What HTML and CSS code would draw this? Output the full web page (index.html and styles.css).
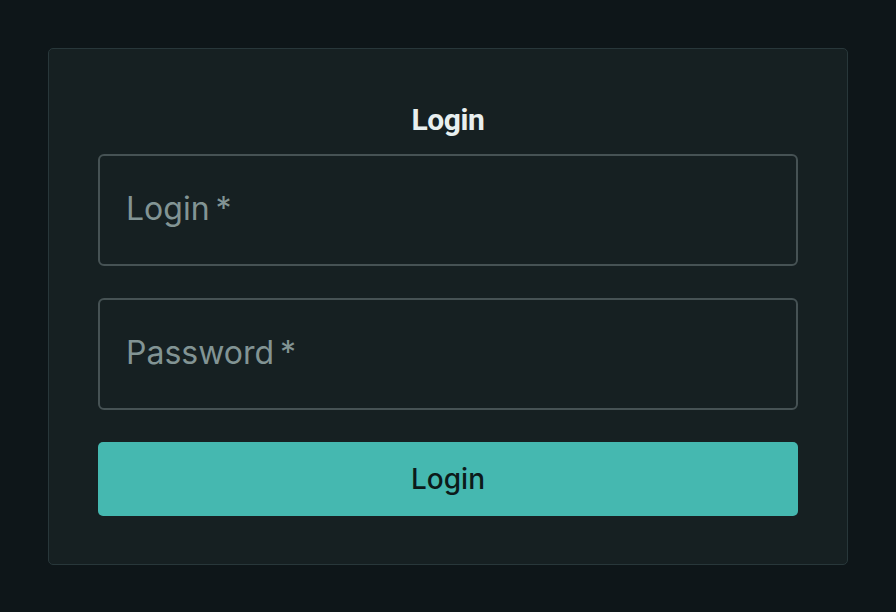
FILE: index.html
```html
<!DOCTYPE html>
<html lang="en">
<head>
<meta charset="utf-8">
<title>Login</title>
<link rel="stylesheet" href="styles.css">
</head>
<body>
<main class="page">
  <form class="card">
    <h1 class="title">Login</h1>
    <div class="fields">
      <label class="field"><span class="field-label">Login&#8201;*</span></label>
      <label class="field"><span class="field-label">Password&#8201;*</span></label>
      <button type="button" class="submit">Login</button>
    </div>
  </form>
</main>
</body>
</html>
```

FILE: styles.css
```css
html, body {
  margin: 0;
  padding: 0;
  background: #0e1619;
}
body {
  font-family: Inter, "Noto Sans", sans-serif;
}
.page {
  padding: 48px;
}
.card {
  box-sizing: border-box;
  width: 800px;
  height: 517px;
  background: #162022;
  border: 1px solid #28373a;
  border-radius: 5px;
  padding: 51px 49px 48px;
  display: flex;
  flex-direction: column;
}
.title {
  margin: 0 0 14px;
  text-align: center;
  font-family: Roboto, sans-serif;
  font-weight: 700;
  font-size: 30px;
  letter-spacing: -0.4px;
  line-height: 40px;
  color: #e8efef;
}
.fields {
  display: flex;
  flex-direction: column;
  gap: 32px;
}
.field {
  box-sizing: border-box;
  height: 112px;
  border: 2px solid #465254;
  border-radius: 6px;
  display: flex;
  align-items: center;
  padding: 0 26px;
}
.field-label {
  font-size: 32px;
  color: #829494;
  margin-top: -4px;
}
.submit {
  height: 74px;
  border: none;
  border-radius: 5px;
  background: #45b8b0;
  color: #0c1a1a;
  font-family: Inter, sans-serif;
  font-size: 28px;
  font-weight: 500;
  cursor: pointer;
}
```
